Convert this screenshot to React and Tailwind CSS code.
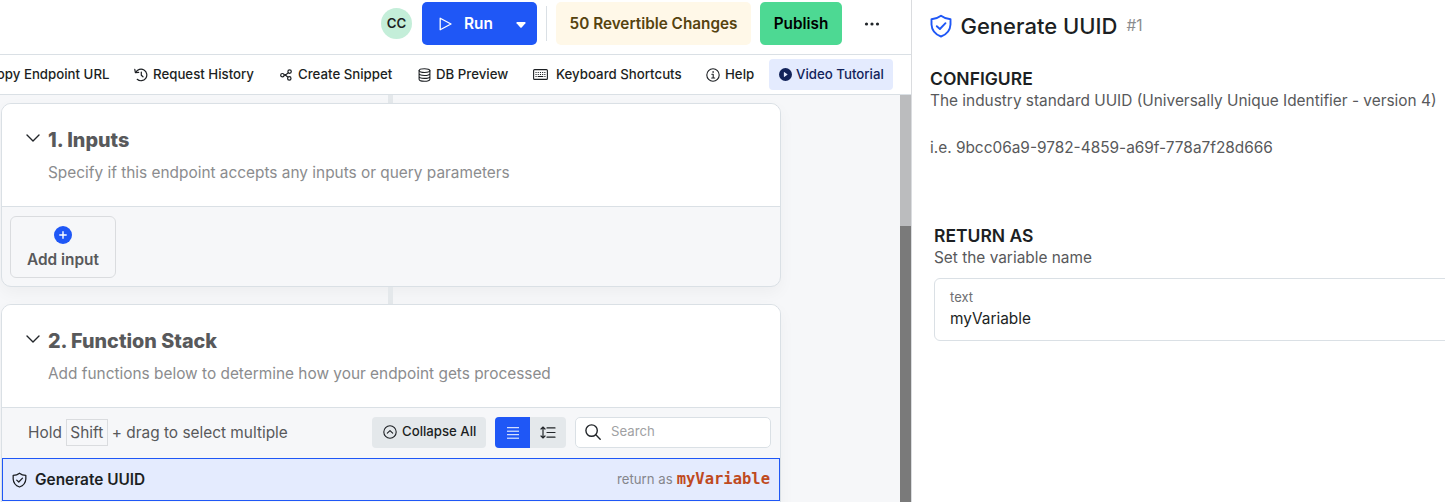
import { BsPlayCircleFill } from "react-icons/bs";

function Shield({ className, sw }) {
  return (
    <svg viewBox="0 0 22 24" className={className} fill="none" stroke="currentColor" strokeWidth={sw} strokeLinecap="round" strokeLinejoin="round">
      <path d="M11 1.800 C8.500 3.800 5.200 4.900 1.500 5.200 V10.500 C1.800 16.500 5.500 20.500 11 22.500 C16.500 20.500 20.200 16.500 20.500 10.500 V5.200 C16.800 4.900 13.500 3.800 11 1.800 Z" />
      <path d="M6.800 12.200 L9.900 15 L15.500 9.200" />
    </svg>
  );
}

function Chevron() {
  return (
    <svg viewBox="0 0 14 8" className="h-[8px] w-[14px]" fill="none" stroke="#212529" strokeWidth="1.400" strokeLinecap="round" strokeLinejoin="round">
      <path d="M1 1 L7 7 L13 1" />
    </svg>
  );
}

function HistoryIcon() {
  return (
    <svg viewBox="0 0 14 14" className="h-[14px] w-[14px]" fill="none" stroke="currentColor" strokeWidth="1.200" strokeLinecap="round" strokeLinejoin="round">
      <path d="M1.800 4.400 A5.800 5.800 0 1 1 3.200 11.300" />
      <path d="M.8 1.400 L1.400 4.700 L4.700 4.300 M7.300 4 V7.200 L9 8.800" />
    </svg>
  );
}

function SnippetIcon() {
  return (
    <svg viewBox="0 0 12 12" className="h-[12px] w-[12px]" fill="none" stroke="currentColor" strokeWidth="1.200">
      <circle cx="2.400" cy="6.200" r="1.700" />
      <circle cx="9.600" cy="2.600" r="1.700" />
      <circle cx="9.300" cy="9.400" r="1.700" />
      <path d="M4.100 5.900 L6.500 5.300 L8.300 3.700 M4.100 6.200 L6 6.500 L8 8.300" />
    </svg>
  );
}

function DatabaseIcon() {
  return (
    <svg viewBox="0 0 13 14" className="h-[14px] w-[13px]" fill="none" stroke="currentColor" strokeWidth="1.100" strokeLinecap="round">
      <ellipse cx="6.500" cy="2.600" rx="5.400" ry="1.900" />
      <path d="M1.100 2.600 V11.300 C1.100 12.500 3.500 13.300 6.500 13.300 S11.900 12.500 11.900 11.300 V2.600 M1.100 5.600 C1.100 6.700 3.500 7.500 6.500 7.500 S11.900 6.700 11.900 5.600 M1.100 8.600 C1.100 9.700 3.500 10.400 6.500 10.400 S11.900 9.700 11.900 8.600" />
    </svg>
  );
}

function KeyboardIcon() {
  return (
    <svg viewBox="0 0 15 11" className="h-[11px] w-[15px]" fill="none" stroke="currentColor" strokeWidth="1.100">
      <rect x=".6" y=".6" width="13.800" height="9.800" rx="1" />
      <path d="M2.500 3.500 H12.500 M2.500 5.500 H12.500" strokeDasharray="1.100 1.100" />
      <path d="M2.500 7.500 H3.600 M4.700 7.500 H10.300 M11.400 7.500 H12.500" />
    </svg>
  );
}

function InfoIcon() {
  return (
    <svg viewBox="0 0 14 14" className="h-[14px] w-[14px]" fill="none" stroke="currentColor" strokeWidth="1.100" strokeLinecap="round" strokeLinejoin="round">
      <circle cx="7" cy="7" r="6.200" />
      <path d="M5.800 6.200 H7.200 V10 M5.700 10 H8.700" />
      <circle cx="7" cy="4" r=".45" fill="currentColor" strokeWidth=".6" />
    </svg>
  );
}

function Tool({ className = "", icon, children }) {
  return (
    <div className={"flex shrink-0 items-center whitespace-nowrap text-[13.250px] font-medium " + className}>
      {icon}
      <span>{children}</span>
    </div>
  );
}

function Header({ title, children }) {
  return (
    <div className="flex h-[103px] gap-[8px] border-b border-[#dae0e5] bg-white pl-[24px]">
      <div className="pt-[30px]"><Chevron /></div>
      <div className="whitespace-nowrap">
        <div className="pt-[22px] text-[19.800px] leading-[28px] font-extrabold text-[#58595b]">{title}</div>
        <div className="mt-[7px] text-[15.400px] leading-[24px] text-[#8b8c8e]">{children}</div>
      </div>
    </div>
  );
}

export default function App() {
  return (
    <div className="flex h-[502px] w-[1445px] overflow-hidden bg-white font-['Inter',sans-serif] text-[#1c1f23]">
      <main className="flex w-[912px] shrink-0 flex-col border-r border-[#dadcdf]">
        <header className="flex h-[55px] shrink-0 items-start border-b border-[#dae0e5] pt-[2px] pl-[381px] whitespace-nowrap">
          <div className="mt-[6px] flex h-[31px] w-[31px] items-center justify-center rounded-full bg-[#c4eed9] text-[13.200px] font-semibold">CC</div>
          <div className="ml-[10px] flex h-[43px] w-[115px] items-center rounded-[5px] bg-[#1f57f6] pl-[17px] text-[15.400px] font-semibold text-white">
            <svg viewBox="0 0 13 14" className="h-[14px] w-[13px]" fill="none" stroke="currentColor" strokeWidth="1.300" strokeLinejoin="round"><path d="M1.200 1.200 L12 7 L1.200 12.800 Z" /></svg>
            <span className="ml-[12px] w-[29px]">Run</span>
            <svg viewBox="0 0 10 6" className="mt-[3px] ml-[23px] h-[6px] w-[10px]" fill="currentColor"><path d="M1 0 H9 Q10 .3 9.400 1.200 L5.700 5.500 Q5 6 4.300 5.500 L.6 1.200 Q0 .3 1 0Z" /></svg>
          </div>
          <div className="mt-[4px] ml-[9px] h-[35px] w-px bg-[#dae0e5]" />
          <div className="ml-[9px] flex h-[43px] w-[195px] items-center justify-center rounded-[5px] bg-[#fff8e8] pt-px text-[15.300px] font-semibold text-[#55430f]">50 Revertible Changes</div>
          <div className="ml-[9px] flex h-[43px] w-[82px] items-center justify-center rounded-[5px] bg-[#4dd993] pt-px text-[15.300px] font-semibold text-black">Publish</div>
          <svg viewBox="0 0 16 4" className="mt-[20px] ml-[22px] h-[4px] w-[16px]" fill="#212529"><circle cx="2.500" cy="2" r="1.600" /><circle cx="8" cy="2" r="1.600" /><circle cx="13.500" cy="2" r="1.600" /></svg>
        </header>
        <nav className="flex h-[40px] shrink-0 items-center border-b border-[#dae0e5]">
          <Tool className="w-[134px] justify-end pr-[24.500px]">Copy Endpoint URL</Tool>
          <Tool className="w-[146px] gap-[5px]" icon={<HistoryIcon />}>Request History</Tool>
          <Tool className="w-[138px] gap-[6px]" icon={<SnippetIcon />}>Create Snippet</Tool>
          <Tool className="w-[115px] gap-[5px]" icon={<DatabaseIcon />}>DB Preview</Tool>
          <Tool className="w-[173px] gap-[8px]" icon={<KeyboardIcon />}>Keyboard Shortcuts</Tool>
          <Tool className="w-[63px] gap-[5px]" icon={<InfoIcon />}>Help</Tool>
          <Tool className="h-[31px] w-[124px] gap-[4px] rounded-[4px] bg-[#e4ebfe] pl-[10px] text-[#12235a]" icon={<BsPlayCircleFill className="h-[13px] w-[13px]" />}>Video Tutorial</Tool>
        </nav>
        <div className="flex h-[407px]">
          <div className="w-[900px] bg-[#f6f7f9] pl-px">
            <div className="ml-[387px] h-[8px] w-[5px] bg-[#e4e8eb]" />
            <section className="h-[184px] w-[780px] overflow-hidden rounded-[10px] border border-[#dae0e5] bg-[#f6f7f9] shadow-[0_6px_16px_rgba(0,0,0,0.04)]">
              <Header title="1. Inputs">Specify if this endpoint accepts any inputs or query parameters</Header>
              <div className="mt-[9px] ml-[8px] flex h-[62px] w-[106px] flex-col items-center rounded-[6px] border border-[#dadcdf] pt-[9px]">
                <svg viewBox="0 0 18 18" className="h-[18px] w-[18px]"><circle cx="9" cy="9" r="9" fill="#1f57f6" /><path d="M9 5.300V12.700M5.300 9H12.700" stroke="white" strokeWidth="1.400" /></svg>
                <div className="mt-[4px] text-[15.400px] leading-[24px] font-semibold whitespace-nowrap text-[#58595b]">Add input</div>
              </div>
            </section>
            <div className="ml-[387px] h-[17px] w-[5px] bg-[#e4e8eb]" />
            <section className="h-[240px] w-[780px] overflow-hidden rounded-t-[10px] border border-[#dae0e5] bg-[#f6f7f9] shadow-[0_6px_16px_rgba(0,0,0,0.04)]">
              <Header title="2. Function Stack">Add functions below to determine how your endpoint gets processed</Header>
              <div className="flex h-[50px] items-center pb-px pl-[26px] text-[15.400px] whitespace-nowrap text-[#58595b]">
                <div className="flex w-[344px] items-center">
                  <span>Hold</span>
                  <kbd className="mx-[4px] flex h-[27px] w-[42px] items-center justify-center border border-[#dadcdf] font-['Inter',sans-serif] text-[15.400px]">Shift</kbd>
                  <span>+ drag to select multiple</span>
                </div>
                <div className="flex h-[31px] w-[114px] items-center gap-[5px] rounded-[4px] bg-[#e4e8eb] pb-px pl-[11px] text-[13.200px] font-medium text-[#1c1f23]">
                  <svg viewBox="0 0 14 14" className="h-[14px] w-[14px]" fill="none" stroke="currentColor" strokeWidth="1.100" strokeLinecap="round" strokeLinejoin="round"><circle cx="7" cy="7" r="6.200" /><path d="M4.300 8.200 L7 5.600 L9.700 8.200" /></svg>
                  <span>Collapse All</span>
                </div>
                <div className="ml-[9px] flex h-[31px] w-[71px] overflow-hidden rounded-[4px] bg-[#e4e8eb] text-[#212529]">
                  <div className="flex w-[35px] items-center justify-center bg-[#1f57f6] pl-px text-white"><svg viewBox="0 0 12 12" className="h-[12px] w-[12px]" stroke="currentColor"><path d="M0 .7H12M0 4.200H12M0 7.700H12M0 11.200H12" /></svg></div>
                  <div className="flex w-[36px] items-center justify-center"><svg viewBox="0 0 16 13" className="h-[13px] w-[16px]" fill="none" stroke="currentColor" strokeWidth="1.200" strokeLinecap="round"><path d="M3 1V12M1 3L3 1L5 3M1 10L3 12L5 10M7 1.900H15M7 6.500H15M7 11.200H15" /></svg></div>
                </div>
                <div className="ml-[9px] flex h-[31px] w-[196px] items-center gap-[10px] rounded-[5px] border border-[#dae0e5] bg-white pb-px pl-[9px] text-[13.200px] text-[#a0a1a3]">
                  <svg viewBox="0 0 16 16" className="h-[16px] w-[16px] text-[#212529]" fill="none" stroke="currentColor" strokeWidth="1.400" strokeLinecap="round"><circle cx="6.600" cy="6.600" r="5.700" /><path d="M10.800 10.800 L15.200 15.200" /></svg>
                  <span>Search</span>
                </div>
              </div>
              <div className="flex h-[43px] items-center border border-[#1f57f6] bg-[#e4ebfe] px-[9px] whitespace-nowrap">
                <Shield className="h-[16px] w-[15px]" sw="1.900" />
                <span className="ml-[8px] text-[15.400px] font-semibold">Generate UUID</span>
                <span className="ml-auto text-[13.200px] text-[#85868c]">return as</span>
                <span className="ml-[4px] font-['DejaVu_Sans_Mono',monospace] text-[15.500px] font-bold text-[#bf4a1f]">myVariable</span>
              </div>
            </section>
          </div>
          <div className="w-[11px] bg-[#7a7a7a]"><div className="h-[131px] bg-[#bbbcbe]" /></div>
        </div>
      </main>
      <aside className="w-[533px] overflow-hidden pl-[18px] whitespace-nowrap">
        <div className="flex h-[52px] items-center">
          <Shield className="h-[24px] w-[22px] text-[#1f57f6]" sw="1.900" />
          <h1 className="ml-[8.500px] text-[22px] font-medium">Generate UUID</h1>
          <span className="ml-[9px] text-[15.400px] text-[#8b8c8e]">#1</span>
        </div>
        <div className="mt-[16px] text-[17.500px] leading-[22px] font-semibold">CONFIGURE</div>
        <div className="-mt-px text-[15.400px] leading-[23.500px] text-[#58595b]">
          <div>The industry standard UUID (Universally Unique Identifier - version 4)</div>
          <div className="mt-[23.500px]">i.e. 9bcc06a9-9782-4859-a69f-778a7f28d666</div>
        </div>
        <div className="mt-[65px] ml-[4px]">
          <div className="text-[17.500px] leading-[22px] font-semibold">RETURN AS</div>
          <div className="-mt-px text-[15.400px] leading-[23px] text-[#58595b]">Set the variable name</div>
          <div className="mt-[9px] h-[63px] w-[560px] rounded-[6px] border border-[#dae0e5] pt-[8px] pl-[15px]">
            <div className="text-[13px] leading-[20px] text-[#6d6e71]">text</div>
            <div className="text-[15.400px] leading-[23px]">myVariable</div>
          </div>
        </div>
      </aside>
    </div>
  );
}
